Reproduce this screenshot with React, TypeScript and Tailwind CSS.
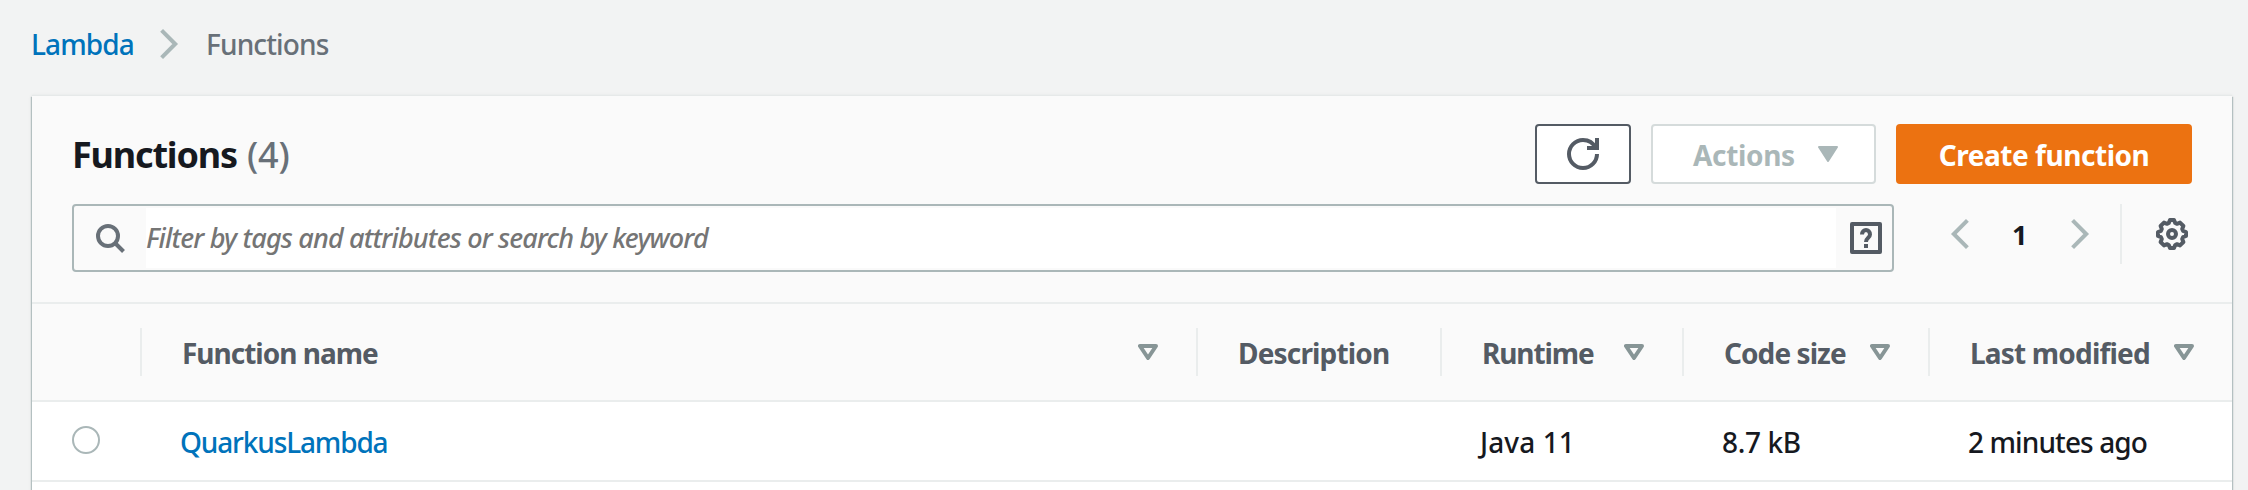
import type { ReactNode } from "react";

function Chevron({ flip = false, className = "" }: { flip?: boolean; className?: string }) {
  return (
    <svg viewBox="0 0 20 32" className={`h-8 w-5 shrink-0 ${className}`} fill="none" stroke="#aab7b8" strokeWidth="4">
      <path d={flip ? "M18.4 2.4 4.8 16l13.6 13.6" : "M1.6 2.4 15.2 16 1.6 29.6"} />
    </svg>
  );
}

function SortIcon() {
  return (
    <svg viewBox="0 0 20 16" className="h-4 w-5 shrink-0" fill="none" stroke="#879596" strokeWidth="4" strokeLinejoin="round">
      <path d="M2 2h16l-8 12z" />
    </svg>
  );
}

function RefreshIcon() {
  return (
    <svg viewBox="0 0 16 16" className="size-8" fill="none" stroke="#545b64" strokeWidth="2">
      <path d="M10 5h5V0" />
      <path d="M15 8a7 7 0 1 1-7-7c2.800 0 5.200 1.600 6.300 4" />
    </svg>
  );
}

function GearIcon() {
  return (
    <svg viewBox="0 0 16 16" className="size-8" fill="none" stroke="#545b64" strokeWidth="2">
      <path
        strokeLinejoin="round"
        d="M7 1h2l.6 1.5.9.4 1.5-.6L13.7 4l-.6 1.5.4.9L15 7v2l-1.5.6-.4.9.6 1.5-1.7 1.700-1.5-.6-.9.4L9 15H7l-.6-1.5-.9-.4-1.5.6L2.300 12l.6-1.5-.4-.9L1 9V7l1.5-.6.4-.9L2.300 4 4 2.300l1.5.6.9-.4z"
      />
      <circle cx="8" cy="8" r="2" />
    </svg>
  );
}

function HeaderCell({ children, sortable = true, last = false }: { children: ReactNode; sortable?: boolean; last?: boolean }) {
  return (
    <div className={`flex h-12 items-center justify-between border-[#eaeded] pr-[38px] pl-10 leading-10 ${last ? "" : "border-r-2"}`}>
      {children}
      {sortable && <SortIcon />}
    </div>
  );
}

const columns = "grid grid-cols-[110px_1056px_244px_242px_246px_302px]";

export default function App() {
  return (
    <div className="h-[490px] w-[2248px] overflow-hidden bg-[#f2f3f3] font-['Noto_Sans',sans-serif] text-[28px] leading-10 text-[#16191f]">
      <nav className="flex h-24 items-start pt-6 pl-[31px] font-medium whitespace-nowrap">
        <a className="w-[129px] tracking-[-0.9px] text-[#0073bb]">Lambda</a>
        <Chevron className="mt-1" />
        <span className="ml-[26px] tracking-[-0.85px] text-[#687078]">Functions</span>
      </nav>

      <main className="ml-8 h-[420px] w-[2200px] bg-white shadow-[0_-1px_1px_#e6e9e9,1px_1px_1px_#aab7b8,-1px_1px_1px_#aab7b8,0_0_4px_#00000018]">
        <header className="h-[206px] bg-[#fafafa] px-10 pt-7">
          <div className="flex h-[60px] items-center">
            <h1 className="flex-1 pt-0.5 text-[36px] font-bold tracking-[-1.18px] whitespace-nowrap">
              Functions <span className="ml-0.5 font-medium tracking-[-0.2px] text-[#687078]">(4)</span>
            </h1>
            <button className="flex h-[60px] w-24 items-center justify-center rounded-[4px] border-2 border-[#545b64] bg-white">
              <RefreshIcon />
            </button>
            <button className="ml-5 flex h-[60px] w-[225px] items-center rounded-[4px] border-2 border-[#d5dbdb] bg-white pl-10 font-bold tracking-[-0.33px] text-[#aab7b8]">
              <span className="w-[125px] pt-0.5 text-left">Actions</span>
              <svg viewBox="0 0 20 16" className="h-4 w-5" fill="#aab7b8" stroke="#aab7b8" strokeWidth="2" strokeLinejoin="round">
                <path d="M1 1h18l-9 14z" />
              </svg>
            </button>
            <button className="ml-5 h-[60px] w-[296px] rounded-[4px] bg-[#ec7211] pt-px font-bold tracking-[-0.45px] text-white">
              Create function
            </button>
          </div>

          <div className="mt-5 flex h-[68px] items-start">
            <div className="flex h-[68px] w-[1822px] items-center rounded-[4px] border-2 border-[#aab7b8]">
              <div className="w-[72px] pl-5">
                <svg viewBox="0 0 32 32" className="size-8" fill="none" stroke="#687078" strokeWidth="4">
                  <circle cx="14" cy="14" r="10" />
                  <path d="m21 21 8.5 8.5" />
                </svg>
              </div>
              <div className="h-[60px] flex-1 bg-white pt-2.5 text-[27px] tracking-[-0.82px] text-[#757575] italic font-medium">
                Filter by tags and attributes or search by keyword
              </div>
              <div className="flex w-14 justify-center pl-1">
                <svg viewBox="0 0 32 32" className="size-8" fill="none" stroke="#545b64" strokeWidth="4">
                  <rect x="2" y="2" width="28" height="28" strokeLinejoin="round" />
                  <path d="M12 12.5c0-6 8-6 8 0 0 3.500-4 3-4 7.500M16 22v4" />
                </svg>
              </div>
            </div>
            <div className="flex h-[60px] items-center">
              <Chevron flip className="ml-[55px]" />
              <b className="ml-[43px] w-[59px] pt-0.5 text-[27px]">1</b>
              <Chevron />
              <div className="ml-[29px] h-[60px] w-[2px] bg-[#eaeded]" />
              <div className="ml-[34px]">
                <GearIcon />
              </div>
            </div>
          </div>
        </header>

        <div className={`${columns} h-[100px] items-center border-y-2 border-[#eaeded] bg-[#fafafa] font-bold whitespace-nowrap text-[#545b64]`}>
          <div className="h-12 border-r-2 border-[#eaeded]" />
          <HeaderCell>
            <span className="pt-0.5 tracking-[-1px]">Function name</span>
          </HeaderCell>
          <HeaderCell sortable={false}>
            <span className="pt-0.5 tracking-[-0.83px]">Description</span>
          </HeaderCell>
          <HeaderCell>
            <span className="pt-0.5 tracking-[-1.1px]">Runtime</span>
          </HeaderCell>
          <HeaderCell>
            <span className="pt-0.5 tracking-[-0.93px]">Code size</span>
          </HeaderCell>
          <HeaderCell last>
            <span className="pt-0.5 tracking-[-0.81px]">Last modified</span>
          </HeaderCell>
        </div>

        <div className={`${columns} h-20 items-center border-b-2 border-[#eaeded] font-medium whitespace-nowrap`}>
          <div className="-mt-0.5 pl-10">
            <div className="size-7 rounded-full border-2 border-[#aab7b8] bg-white" />
          </div>
          <a className="pt-0.5 pl-[38px] tracking-[-1.15px] text-[#0073bb]">QuarkusLambda</a>
          <span />
          <span className="pt-0.5 pl-[38px] tracking-[0.1px]">Java 11</span>
          <span className="pt-0.5 pl-[38px] tracking-[-0.35px]">8.7 kB</span>
          <span className="pt-0.5 pl-[38px] tracking-[-0.9px]">2 minutes ago</span>
        </div>
      </main>
    </div>
  );
}
